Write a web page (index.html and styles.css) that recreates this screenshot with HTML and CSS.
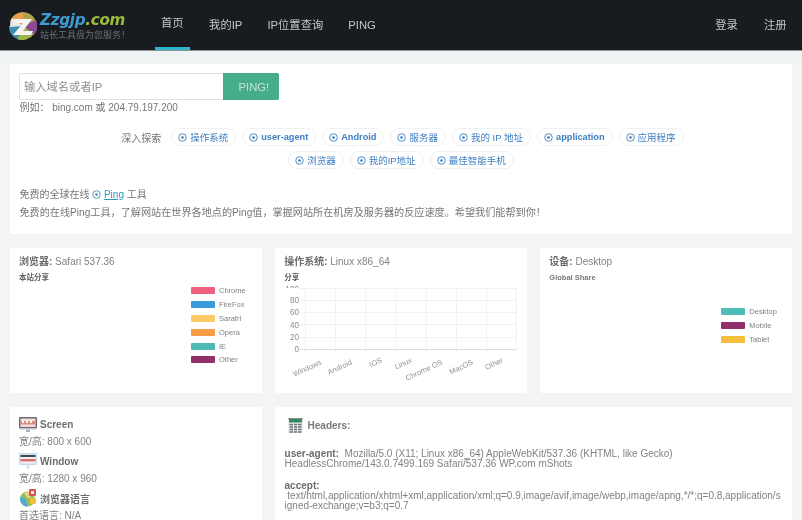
FILE: index.html
```html
<!DOCTYPE html>
<html lang="zh">
<head>
<meta charset="utf-8">
<title>Zzgjp.com</title>
<link rel="stylesheet" href="styles.css">
</head>
<body>
<nav class="navbar">
  <a class="brand">
    <svg class="logo" width="28" height="28" viewBox="0 0 28 28">
      <path d="M14 0A14 14 0 0 0 1 9L14 14Z" fill="#e8a04a"/>
      <path d="M14 0A14 14 0 0 1 27 9L14 14Z" fill="#b0a050"/>
      <path d="M27 8A14 14 0 0 1 25 23L14 14Z" fill="#8f4a96"/>
      <path d="M25 22A14 14 0 0 1 8 27L14 14Z" fill="#9ab54a"/>
      <path d="M8 27A14 14 0 0 1 0 14L14 14Z" fill="#3f8fb0"/>
      <path d="M1 15A14 14 0 0 1 3 6L14 14Z" fill="#e8e8e8"/>
      <path d="M5 7H23L14 19H24L22 23H4L14 11H6Z" fill="#f4f4f4"/>
    </svg>
    <span class="brand-text">
      <span class="brand-name">Zzgjp<span class="brand-com">.com</span></span>
      <span class="brand-tag">站长工具盘为您服务！</span>
    </span>
  </a>
  <ul class="nav-main">
    <li class="nav-item active">首页</li>
    <li class="nav-item">我的IP</li>
    <li class="nav-item">IP位置查询</li>
    <li class="nav-item">PING</li>
  </ul>
  <ul class="nav-user">
    <li class="nav-item">登录</li>
    <li class="nav-item">注册</li>
  </ul>
</nav>

<main class="page">
  <section class="card hero">
    <form class="ping-form">
      <input class="ping-input" type="text" placeholder="输入域名或者IP">
      <button class="ping-btn" type="button">PING!</button>
    </form>
    <p class="example">例如： bing.com 或 204.79.197.200</p>
    <div class="explore">
      <span class="explore-label">深入探索</span>
      <a class="tag"><svg class="dot-icon" viewBox="0 0 10 10"><circle cx="5" cy="5" r="4.2"/><circle class="dot" cx="5" cy="5" r="1.5"/></svg>操作系统</a>
      <a class="tag strong"><svg class="dot-icon" viewBox="0 0 10 10"><circle cx="5" cy="5" r="4.2"/><circle class="dot" cx="5" cy="5" r="1.5"/></svg>user-agent</a>
      <a class="tag strong"><svg class="dot-icon" viewBox="0 0 10 10"><circle cx="5" cy="5" r="4.2"/><circle class="dot" cx="5" cy="5" r="1.5"/></svg>Android</a>
      <a class="tag"><svg class="dot-icon" viewBox="0 0 10 10"><circle cx="5" cy="5" r="4.2"/><circle class="dot" cx="5" cy="5" r="1.5"/></svg>服务器</a>
      <a class="tag"><svg class="dot-icon" viewBox="0 0 10 10"><circle cx="5" cy="5" r="4.2"/><circle class="dot" cx="5" cy="5" r="1.5"/></svg>我的 IP 地址</a>
      <a class="tag strong"><svg class="dot-icon" viewBox="0 0 10 10"><circle cx="5" cy="5" r="4.2"/><circle class="dot" cx="5" cy="5" r="1.5"/></svg>application</a>
      <a class="tag"><svg class="dot-icon" viewBox="0 0 10 10"><circle cx="5" cy="5" r="4.2"/><circle class="dot" cx="5" cy="5" r="1.5"/></svg>应用程序</a>
      <a class="tag"><svg class="dot-icon" viewBox="0 0 10 10"><circle cx="5" cy="5" r="4.2"/><circle class="dot" cx="5" cy="5" r="1.5"/></svg>浏览器</a>
      <a class="tag"><svg class="dot-icon" viewBox="0 0 10 10"><circle cx="5" cy="5" r="4.2"/><circle class="dot" cx="5" cy="5" r="1.5"/></svg>我的IP地址</a>
      <a class="tag"><svg class="dot-icon" viewBox="0 0 10 10"><circle cx="5" cy="5" r="4.2"/><circle class="dot" cx="5" cy="5" r="1.5"/></svg>最佳智能手机</a>
    </div>
    <p class="intro-line">免费的全球在线 <svg class="dot-icon link-icon" viewBox="0 0 10 10"><circle cx="5" cy="5" r="4.2"/><circle class="dot" cx="5" cy="5" r="1.5"/></svg> <a class="ping-link">Ping</a> 工具</p>
    <p class="intro-desc">免费的在线Ping工具，了解网站在世界各地点的Ping值，掌握网站所在机房及服务器的反应速度。希望我们能帮到你！</p>
  </section>

  <div class="grid">
    <section class="card chart-card">
      <h3 class="card-title"><b>浏览器:</b> Safari 537.36</h3>
      <h4 class="chart-title">本站分享</h4>
      <ul class="legend legend-browser">
        <li class="legend-item"><i class="swatch c-red"></i>Chrome</li>
        <li class="legend-item"><i class="swatch c-blue"></i>FireFox</li>
        <li class="legend-item"><i class="swatch c-yellow"></i>Sarafri</li>
        <li class="legend-item"><i class="swatch c-orange"></i>Opera</li>
        <li class="legend-item"><i class="swatch c-teal"></i>IE</li>
        <li class="legend-item"><i class="swatch c-purple"></i>Other</li>
      </ul>
    </section>

    <section class="card chart-card">
      <h3 class="card-title"><b>操作系统:</b> Linux x86_64</h3>
      <h4 class="chart-title">分享</h4>
      <svg class="bar-chart" width="232" height="94" viewBox="0 0 232 94">
        <defs>
          <clipPath id="top-label-clip"><rect x="0" y="-4" width="20" height="4"/></clipPath>
        </defs>
        <g class="grid-lines">
          <path d="M16 0.500H233M16 12.500H233M16 24.500H233M16 36.500H233M16 49.500H233"/>
          <path d="M21.500 0V66M51.500 0V66M82 0V66M112 0V66M142 0V66M172.500 0V66M202.500 0V66M232.500 0V61"/>
        </g>
        <path class="axis" d="M16 61.500H233"/>
        <g class="y-labels">
          <text x="15" y="3.500" clip-path="url(#top-label-clip)">100</text>
          <text x="15" y="15">80</text>
          <text x="15" y="27">60</text>
          <text x="15" y="39.500">40</text>
          <text x="15" y="51.500">20</text>
          <text x="15" y="64">0</text>
        </g>
        <g class="x-labels">
          <text transform="translate(38 76) rotate(-25)">Windows</text>
          <text transform="translate(68.500 76) rotate(-25)">Android</text>
          <text transform="translate(98.500 74) rotate(-25)">IOS</text>
          <text transform="translate(128.500 74) rotate(-25)">Linux</text>
          <text transform="translate(159 76) rotate(-25)">Chrome OS</text>
          <text transform="translate(189.500 76) rotate(-25)">MacOS</text>
          <text transform="translate(219.500 74) rotate(-25)">Other</text>
        </g>
      </svg>
    </section>

    <section class="card chart-card">
      <h3 class="card-title"><b>设备:</b> Desktop</h3>
      <h4 class="chart-title chart-title-muted">Global Share</h4>
      <ul class="legend legend-device">
        <li class="legend-item"><i class="swatch c-cyan"></i>Desktop</li>
        <li class="legend-item"><i class="swatch c-purple"></i>Mobile</li>
        <li class="legend-item"><i class="swatch c-gold"></i>Tablet</li>
      </ul>
    </section>

    <section class="card info-card">
      <div class="info-head">
        <svg class="info-icon" width="18" height="15" viewBox="0 0 18 15">
          <rect x="0" y="0" width="18" height="11.500" rx="1" fill="#6b6b70"/>
          <rect x="1.500" y="1.500" width="15" height="8.500" fill="#f3dcd8"/>
          <path d="M1.500 4H16.500V7.500H1.500Z" fill="#e08a85"/>
          <path d="M3 3H5V6H3ZM7 3H9V6H7ZM11 3H13V6H11Z" fill="#f8f4f2"/>
          <path d="M1 11.500H17V12.500H1Z" fill="#c4ccd4"/>
          <path d="M7 12.500H11V15H7Z" fill="#aab4bd"/>
        </svg>
        <b>Screen</b>
      </div>
      <p class="info-line">宽/高: 800 x 600</p>
      <div class="info-head">
        <svg class="info-icon" width="18" height="16" viewBox="0 0 18 16">
          <rect x="0" y="0" width="18" height="12" rx="1" fill="#c3dcec"/>
          <rect x="1.500" y="1.500" width="15" height="9" fill="#f7f3f0"/>
          <path d="M1.500 2H16.500V4H1.500Z" fill="#3c4654"/>
          <path d="M1.500 6H16.500V8.500H1.500Z" fill="#d9706c"/>
          <path d="M7.500 12H10.500V16H7.500Z" fill="#dfe4e8"/>
        </svg>
        <b>Window</b>
      </div>
      <p class="info-line">宽/高: 1280 x 960</p>
      <div class="info-head">
        <svg class="info-icon" width="18" height="18" viewBox="0 0 18 18">
          <circle cx="8.500" cy="10" r="7.500" fill="#8fc35a"/>
          <path d="M1.500 7.500A7.500 7.500 0 0 0 8.500 17.500L6.500 10Z" fill="#4fa8d8"/>
          <path d="M5 4A7 7 0 0 1 14 5L9.500 10Z" fill="#e6d28a"/>
          <rect x="10" y="0" width="7" height="7" rx="1" fill="#d9534f"/>
          <rect x="12" y="2" width="3" height="3" fill="#f6e7e5"/>
          <rect x="11" y="9" width="6" height="6" rx="1" fill="#f0c040"/>
        </svg>
        <b>浏览器语言</b>
      </div>
      <p class="info-line">首选语言: N/A</p>
    </section>

    <section class="card headers-card">
      <div class="headers-head">
        <svg class="headers-icon" width="15" height="15" viewBox="0 0 15 15">
          <rect x="0" y="0" width="15" height="15" fill="#eceeec"/>
          <rect x="0" y="0" width="15" height="1" fill="#8a8f8c"/>
          <rect x="1" y="1" width="13" height="3.500" fill="#2f8a63"/>
          <path d="M1.500 6.500H13.500M1.500 9H13.500M1.500 11.500H13.500M1.500 14H13.500" stroke="#6a6f74" stroke-width="1.400"/>
          <path d="M5.500 5V15M9.500 5V15" stroke="#eceeec"/>
        </svg>
        <b>Headers:</b>
      </div>
      <p class="header-row"><b>user-agent:</b>&nbsp; Mozilla/5.0 (X11; Linux x86_64) AppleWebKit/537.36 (KHTML, like Gecko) HeadlessChrome/143.0.7499.169 Safari/537.36 WP.com mShots</p>
      <p class="header-row"><b>accept:</b><br>&nbsp;text/html,application/xhtml+xml,application/xml;q=0.9,image/avif,image/webp,image/apng,*/*;q=0.8,application/signed-exchange;v=b3;q=0.7</p>
    </section>
  </div>
</main>
</body>
</html>
```
FILE: styles.css
```css
* {
  box-sizing: border-box;
}
html, body {
  height: 520px;
  overflow: hidden;
}
body {
  margin: 0;
  background: #f2f4f6;
  color: #74777a;
  font-family: "Liberation Sans", "Noto Sans CJK SC", sans-serif;
  font-size: 10px;
  filter: blur(0.35px);
}
p, h3, h4, ul {
  margin: 0;
  padding: 0;
}
ul {
  list-style: none;
}

.navbar {
  display: flex;
  align-items: stretch;
  height: 51px;
  background: #181b1f;
  border-bottom: 1px solid #8b9091;
}
.brand {
  display: flex;
  align-items: center;
  gap: 3px;
  width: 154.500px;
  padding-left: 9px;
}
.logo {
  flex: none;
  margin-top: 1px;
}
.brand-text {
  display: flex;
  flex-direction: column;
  margin-top: 2px;
}
.brand-name {
  font-family: "DejaVu Sans", sans-serif;
  font-size: 15.200px;
  line-height: 17px;
  font-weight: 700;
  font-style: italic;
  color: #3d9bd0;
  letter-spacing: -0.300px;
}
.brand-com {
  color: #9bbb3c;
}
.brand-tag {
  font-size: 9px;
  line-height: 12px;
  color: #6c7072;
  white-space: nowrap;
}
.nav-main, .nav-user {
  display: flex;
}
.nav-user {
  margin-left: auto;
  padding-right: 15.500px;
  gap: 26px;
}
.nav-main {
  gap: 25px;
}
.nav-item {
  display: flex;
  align-items: center;
  font-size: 11.300px;
  line-height: 14px;
  color: #c4c6c8;
}
.nav-item.active {
  align-items: flex-start;
  padding: 16px 6.500px 0;
  margin-right: -6px;
  box-shadow: inset 0 -3px 0 #2bb7cf;
}

.page {
  padding: 13px 10px 0;
  background: linear-gradient(#eef3f4 13px, #f2f4f6 13px);
}
.card {
  background: #fff;
  border-radius: 2px;
}
.hero {
  height: 170px;
  padding: 9px 9.400px;
}
.ping-form {
  display: flex;
  height: 27px;
}
.ping-input {
  width: 204px;
  height: 27px;
  padding: 0 3.500px;
  border: 1px solid #dfe3e3;
  border-right: 0;
  border-radius: 2px 0 0 2px;
  font: 11.300px "Liberation Sans", "Noto Sans CJK SC", sans-serif;
  color: #676a6c;
}
.ping-input::placeholder {
  color: #8d9092;
}
.ping-btn {
  width: 56px;
  height: 27px;
  padding: 0 0 0 5px;
  border: 0;
  border-radius: 0 2px 2px 0;
  background: #45ad87;
  color: #bfe5d7;
  font: 11.300px "Liberation Sans", sans-serif;
}
.example {
  margin-top: 1px;
  line-height: 14px;
}
.explore {
  display: flex;
  flex-wrap: wrap;
  justify-content: center;
  align-items: center;
  gap: 5px 6px;
  margin: 13px 0 0;
  padding: 0 80px;
  width: 763px;
}
.explore-label {
  margin: 0 4px 0 3px;
}
.tag {
  display: inline-flex;
  align-items: center;
  height: 18px;
  padding: 0 7px 0 6px;
  border: 1px solid #eef1f3;
  border-radius: 9px;
  color: #3d7fc0;
  font-size: 9.500px;
  white-space: nowrap;
}
.tag.strong {
  font-size: 9.200px;
  font-weight: 700;
}
.dot-icon {
  width: 9px;
  height: 9px;
  margin-right: 3px;
  fill: none;
  stroke: #3d7fc0;
  stroke-width: 1;
}
.dot-icon .dot {
  fill: #3d7fc0;
  stroke: none;
}
.link-icon {
  stroke: #3d8fb8;
  margin-right: 0;
  vertical-align: -1px;
}
.link-icon .dot {
  fill: #3d8fb8;
}
.intro-line {
  margin-top: 18px;
  line-height: 16px;
}
.ping-link {
  color: #2e9cc0;
  text-decoration: underline;
}
.intro-desc {
  margin-top: 2px;
  line-height: 16px;
  font-size: 10.150px;
}

.grid {
  display: grid;
  grid-template-columns: repeat(3, 1fr);
  grid-template-rows: 145px auto;
  gap: 14px 13.500px;
  margin-top: 14px;
}
.chart-card {
  position: relative;
  padding: 7px 9px;
}
.card-title {
  font-size: 10px;
  line-height: 13px;
  font-weight: 400;
  color: #808285;
}
.card-title b {
  color: #6a6c6e;
}
.chart-title {
  margin-top: 4px;
  font-size: 7.500px;
  line-height: 12px;
  color: #5a5c5e;
}
.chart-title-muted {
  color: #77797b;
}
.legend {
  position: absolute;
  left: 181px;
  display: flex;
  flex-direction: column;
}
.legend-browser {
  top: 36px;
}
.legend-device {
  top: 57px;
}
.legend-item {
  display: flex;
  align-items: center;
  height: 13.800px;
  font-size: 7.500px;
  color: #808285;
}
.swatch {
  width: 24px;
  height: 7px;
  margin-right: 4px;
  border-radius: 1px;
}
.c-red { background: #f0607f; }
.c-blue { background: #3a9bdc; }
.c-yellow { background: #fbcb66; }
.c-orange { background: #f79d45; }
.c-teal { background: #4fb9b3; }
.c-cyan { background: #4fbdb9; }
.c-purple { background: #8f3068; }
.c-gold { background: #f4bf3d; }

.bar-chart {
  display: block;
  overflow: visible;
  margin-top: 4px;
}
.grid-lines path {
  fill: none;
  stroke: #f1f2f3;
  stroke-width: 1;
}
.axis {
  fill: none;
  stroke: #dcdee0;
}
.y-labels text {
  font-size: 8.200px;
  fill: #8a8c8e;
  text-anchor: end;
}
.x-labels text {
  font-size: 7.500px;
  fill: #909295;
  text-anchor: end;
}

.info-card {
  padding: 8px 9px;
  height: 120px;
}
.info-head {
  display: flex;
  align-items: center;
  gap: 3px;
  height: 18px;
  color: #6a6c6e;
}
.info-icon {
  flex: none;
}
.info-line {
  height: 19px;
  line-height: 18px;
  color: #808285;
}
.headers-card {
  grid-column: span 2;
  padding: 11px 9.400px;
  height: 120px;
}
.headers-head {
  display: flex;
  align-items: center;
  gap: 5px;
  margin-left: 3px;
  height: 15px;
  color: #777a7c;
}
.header-row {
  margin-top: 12px;
  line-height: 10px;
  color: #808285;
  overflow-wrap: anywhere;
}
.header-row b {
  color: #6a6c6e;
}
.headers-head + .header-row {
  margin-top: 16px;
}
```
